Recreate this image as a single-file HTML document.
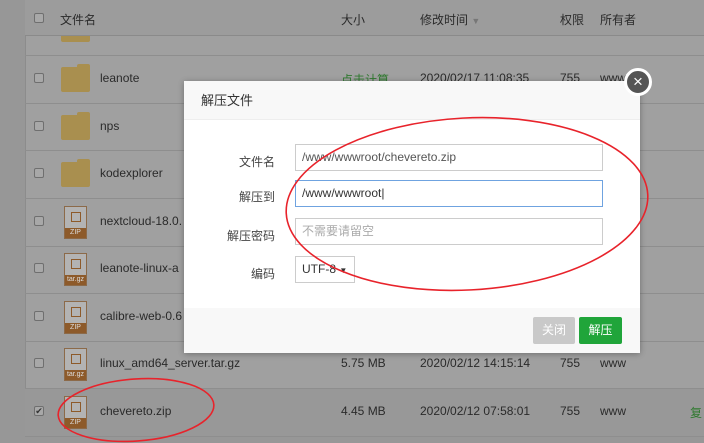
<!DOCTYPE html>
<html><head><meta charset="utf-8"><style>
*{margin:0;padding:0;box-sizing:border-box}
body{width:704px;height:443px;overflow:hidden;background:#979797;font-family:"Liberation Sans","Noto Sans CJK SC",sans-serif;font-size:12px;color:#333;position:relative}
.tbl{position:absolute;left:25px;top:0;width:700px;height:436px;background:#a0a0a0;border-left:1px solid #8c8c8c}
.hdr{position:absolute;left:25px;top:0;width:700px;height:36px;background:#9c9c9c;border-bottom:1px solid #8a8a8a}
.row{position:absolute;left:25px;width:700px;border-top:1px solid #8e8e8e}
.t{position:absolute;color:#2a2a2a;font-size:12px;white-space:nowrap}
.cb{position:absolute;left:34px;width:10px;height:10px;border:1px solid #6f6f6f;border-radius:2px;background:#a8a8a8}
.fold{position:absolute;left:61px;width:29px;height:25px;background:#a98f4f;border-radius:2px}
.fold:before{content:"";position:absolute;left:16px;top:-3px;width:13px;height:5px;background:#a98f4f;border-radius:2px 2px 0 0}
.zip{position:absolute;left:64px;width:23px;height:33px;background:#b3b3b3;border:1px solid #8c6a49}
.zip i{position:absolute;left:6px;top:5px;width:10px;height:10px;border:1px solid #8d5a2a}
.zip b{position:absolute;left:0;bottom:0;width:21px;height:10px;background:#8d5a2a;color:#ddd;font-size:7px;font-weight:normal;text-align:center;line-height:10px}
.dlg{position:absolute;left:184px;top:81px;width:456px;height:272px;background:#fff;box-shadow:0 1px 6px rgba(0,0,0,.3)}
.dh{height:39px;background:#f8f8f8;border-bottom:1px solid #eee;padding-left:17px;line-height:39px;font-size:13px;color:#333}
.lab{position:absolute;right:365px;font-size:12px;color:#444;text-align:right}
.in{position:absolute;left:111px;width:308px;height:27px;border:1px solid #ccc;padding-left:6px;line-height:25px;font-size:12px;color:#555}
.df{position:absolute;left:0;top:227px;width:456px;height:45px;background:#f8f8f8}
.btn{position:absolute;top:236px;height:27px;line-height:27px;color:#fff;text-align:center;font-size:12px;border-radius:2px}
</style></head><body>
<div class="tbl"></div>
<div class="hdr"></div>
<div class="cb" style="top:13px"></div>
<div class="t" style="left:60px;top:11px">文件名</div>
<div class="t" style="left:341px;top:11px">大小</div>
<div class="t" style="left:420px;top:11px">修改时间 <span style="color:#777;font-size:9px">▼</span></div>
<div class="t" style="left:560px;top:11px">权限</div>
<div class="t" style="left:600px;top:11px">所有者</div>
<div style="position:absolute;left:61px;top:36px;width:29px;height:6px;background:#a98f4f;border-radius:0 0 2px 2px"></div>
<div class="row" style="top:55px"></div>
<div class="row" style="top:103px"></div>
<div class="row" style="top:150px"></div>
<div class="row" style="top:198px"></div>
<div class="row" style="top:246px"></div>
<div class="row" style="top:293px"></div>
<div class="row" style="top:341px"></div>
<div class="row" style="top:388px"></div>
<div class="row" style="top:436px"></div>
<div style="position:absolute;left:25px;top:389px;width:700px;height:47px;background:#989898"></div>

<div class="cb" style="top:73px"></div><div class="fold" style="top:67px"></div><div class="t" style="left:100px;top:71px">leanote</div>
<div class="t" style="left:341px;top:71px;color:#2f7a2f">点击计算</div><div class="t" style="left:420px;top:71px">2020/02/17 11:08:35</div><div class="t" style="left:560px;top:71px">755</div><div class="t" style="left:600px;top:71px">www</div>
<div class="cb" style="top:121px"></div><div class="fold" style="top:115px"></div><div class="t" style="left:100px;top:119px">nps</div>
<div class="cb" style="top:168px"></div><div class="fold" style="top:162px"></div><div class="t" style="left:100px;top:166px">kodexplorer</div>
<div class="cb" style="top:216px"></div><div class="zip" style="top:206px"><i></i><b>ZIP</b></div><div class="t" style="left:100px;top:214px">nextcloud-18.0.</div>
<div class="cb" style="top:263px"></div><div class="zip" style="top:253px"><i></i><b>tar.gz</b></div><div class="t" style="left:100px;top:261px">leanote-linux-a</div>
<div class="cb" style="top:311px"></div><div class="zip" style="top:301px"><i></i><b>ZIP</b></div><div class="t" style="left:100px;top:309px">calibre-web-0.6</div>
<div class="cb" style="top:358px"></div><div class="zip" style="top:348px"><i></i><b>tar.gz</b></div><div class="t" style="left:100px;top:356px">linux_amd64_server.tar.gz</div>
<div class="t" style="left:341px;top:356px">5.75 MB</div><div class="t" style="left:420px;top:356px">2020/02/12 14:15:14</div><div class="t" style="left:560px;top:356px">755</div><div class="t" style="left:600px;top:356px">www</div>
<div class="cb" style="top:406px;font-size:9px;line-height:8px;text-align:center">✔</div><div class="zip" style="top:396px"><i></i><b>ZIP</b></div><div class="t" style="left:100px;top:404px">chevereto.zip</div>
<div class="t" style="left:341px;top:404px">4.45 MB</div><div class="t" style="left:420px;top:404px">2020/02/12 07:58:01</div><div class="t" style="left:560px;top:404px">755</div><div class="t" style="left:600px;top:404px">www</div><div class="t" style="left:690px;top:404px;color:#2f7a2f">复</div>

<div class="dlg">
<div class="dh">解压文件</div>
<div class="lab" style="top:72px">文件名</div>
<div class="in" style="top:63px">/www/wwwroot/chevereto.zip</div>
<div class="lab" style="top:107px">解压到</div>
<div class="in" style="top:99px;border-color:#6fa3e0;color:#333">/www/wwwroot|</div>
<div class="lab" style="top:146px">解压密码</div>
<div class="in" style="top:137px;color:#aaa">不需要请留空</div>
<div class="lab" style="top:184px">编码</div>
<div class="in" style="top:175px;width:60px;color:#333">UTF-8 <span style="font-size:8px">▼</span></div>
<div class="df"></div>
<div class="btn" style="left:349px;width:42px;background:#c9c9c9">关闭</div>
<div class="btn" style="left:395px;width:43px;background:#20a53a">解压</div>
</div>
<div style="position:absolute;left:624px;top:68px;width:28px;height:28px;border-radius:50%;background:#555;border:3px solid #fff;color:#fff;font-size:17px;line-height:21px;text-align:center">×</div>

<svg width="704" height="443" style="position:absolute;left:0;top:0">
<ellipse cx="467" cy="204" rx="181" ry="86" fill="none" stroke="#e8232b" stroke-width="1.6" transform="rotate(-3 467 204)"/>
<ellipse cx="136" cy="410" rx="78" ry="31" fill="none" stroke="#e8232b" stroke-width="1.6" transform="rotate(-4 136 410)"/>
</svg>
</body></html>
